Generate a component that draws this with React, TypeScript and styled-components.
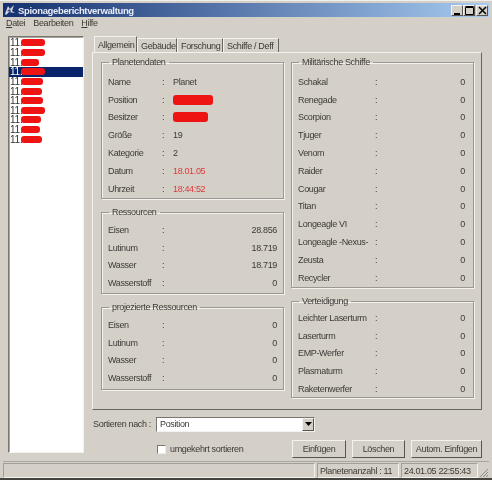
import styled, { createGlobalStyle } from 'styled-components';

const GlobalStyle = createGlobalStyle`
  html, body {
    margin: 0;
    padding: 0;
    background: #d4d0c8;
  }
  * {
    box-sizing: border-box;
  }
`;

const listWidths = [24, 24, 18, 24, 22, 21, 22, 24, 20, 19, 21];
const planetRows: [string, string, number?, boolean?][] = [
  ['Name', 'Planet'],
  ['Position', '', 40],
  ['Besitzer', '', 35],
  ['Größe', '19'],
  ['Kategorie', '2'],
  ['Datum', '18.01.05', undefined, true],
  ['Uhrzeit', '18:44:52', undefined, true],
];
const resources = [
  ['Eisen', '28.856'],
  ['Lutinum', '18.719'],
  ['Wasser', '18.719'],
  ['Wasserstoff', '0'],
];
const projected = ['Eisen', 'Lutinum', 'Wasser', 'Wasserstoff'];
const ships = [
  'Schakal', 'Renegade', 'Scorpion', 'Tjuger', 'Venom', 'Raider',
  'Cougar', 'Titan', 'Longeagle VI', 'Longeagle -Nexus-', 'Zeusta', 'Recycler',
];
const defence = ['Leichter Laserturm', 'Laserturm', 'EMP-Werfer', 'Plasmaturm', 'Raketenwerfer'];

const App = () => {
  return (
    <Page>
      <GlobalStyle />
      <TitleBar>
        <TitleIcon viewBox="0 0 12 12">
          <path d="M1 10 L4 2 L6 5 L10 1 L8 7 L11 9 L5 8 L2 11 Z" fill="#d8d8e8" />
          <path d="M3 7 L6 5 L7 8 Z" fill="#30406a" />
        </TitleIcon>
        <TitleText>Spionageberichtverwaltung</TitleText>
        <WinButtons>
          <WinButton>
            <svg width="9" height="9" viewBox="0 0 9 9"><rect x="1" y="7" width="6" height="2" fill="#000" /></svg>
          </WinButton>
          <WinButton>
            <svg width="9" height="9" viewBox="0 0 9 9"><path d="M0.5 1.5H8.5V8.5H0.5Z M0.5 0.5H8.5" fill="none" stroke="#000" /></svg>
          </WinButton>
          <CloseButton>
            <svg width="9" height="9" viewBox="0 0 9 9"><path d="M1 1L8 8M8 1L1 8" stroke="#000" strokeWidth="1.5" /></svg>
          </CloseButton>
        </WinButtons>
      </TitleBar>
      <MenuBar>
        <MenuItem><u>D</u>atei</MenuItem>
        <MenuItem>Bearbeiten</MenuItem>
        <MenuItem><u>H</u>ilfe</MenuItem>
      </MenuBar>
      <Body>
        <PlanetList>
          {listWidths.map((w, i) => (
            <ListRow key={i} $selected={i === 3}>
              11.<ListScribble $w={w} $h={7} />
            </ListRow>
          ))}
        </PlanetList>
        <MainColumn>
          <Tabs>
            <Tab $active $w={43}>Allgemein</Tab>
            <Tab $w={40}>Gebäude</Tab>
            <Tab $w={46}>Forschung</Tab>
            <Tab $w={56}>Schiffe / Deff</Tab>
          </Tabs>
          <TabPanel>
            <PanelColumn>
              <Group $h={142} $pad={5}>
                <Legend>Planetendaten</Legend>
                {planetRows.map(([label, value, blob, red]) => (
                  <Row key={label}>
                    <span>{label}</span>
                    <span>:</span>
                    {blob ? <Scribble $w={blob} $h={10} /> : <LeftValue $red={red}>{value}</LeftValue>}
                  </Row>
                ))}
              </Group>
              <Group $h={87} $pad={3}>
                <Legend>Ressourcen</Legend>
                {resources.map(([label, value]) => (
                  <Row key={label}>
                    <span>{label}</span>
                    <span>:</span>
                    <RightValue>{value}</RightValue>
                  </Row>
                ))}
              </Group>
              <Group $h={88} $pad={3}>
                <Legend>projezierte Ressourcen</Legend>
                {projected.map(label => (
                  <Row key={label}>
                    <span>{label}</span>
                    <span>:</span>
                    <RightValue>0</RightValue>
                  </Row>
                ))}
              </Group>
            </PanelColumn>
            <PanelColumn>
              <Group $h={231} $pad={5}>
                <Legend>Militärische Schiffe</Legend>
                {ships.map(label => (
                  <WideRow key={label}>
                    <span>{label}</span>
                    <span>:</span>
                    <RightValue>0</RightValue>
                  </WideRow>
                ))}
              </Group>
              <Group $h={102} $pad={2}>
                <Legend>Verteidigung</Legend>
                {defence.map(label => (
                  <WideRow key={label}>
                    <span>{label}</span>
                    <span>:</span>
                    <RightValue>0</RightValue>
                  </WideRow>
                ))}
              </Group>
            </PanelColumn>
          </TabPanel>
          <SortRow>
            <SortLabel>Sortieren nach :</SortLabel>
            <Combo>
              <ComboText>Position</ComboText>
              <ComboArrow>
                <svg width="7" height="4" viewBox="0 0 7 4"><path d="M0 0H7L3.5 4Z" fill="#000" /></svg>
              </ComboArrow>
            </Combo>
          </SortRow>
          <ActionRow>
            <CheckLabel>
              <CheckBox />
              umgekehrt sortieren
            </CheckLabel>
            <Buttons>
              <ActionButton $w={54}>Einfügen</ActionButton>
              <ActionButton $w={53}>Löschen</ActionButton>
              <ActionButton $w={71}>Autom. Einfügen</ActionButton>
            </Buttons>
          </ActionRow>
        </MainColumn>
      </Body>
      <StatusBar>
        <StatusCell $w={312} />
        <StatusCell $w={82}>Planetenanzahl : 11</StatusCell>
        <StatusCell $w={77}>24.01.05 22:55:43</StatusCell>
        <Grip width="12" height="12" viewBox="0 0 12 12">
          <path d="M11 3L3 11M11 6L6 11M11 9L9 11" stroke="#8c8a84" strokeWidth="1" />
        </Grip>
      </StatusBar>
    </Page>
  );
};

export default App;

const Page = styled.div`
  position: relative;
  width: 492px;
  height: 480px;
  padding: 2px 3px 2px 3px;
  background: #d4d0c8;
  border-top: 1px solid #f2f0ec;
  border-bottom: 2px solid #45443f;
  font-family: 'Liberation Sans', Arial, sans-serif;
  font-size: 9px;
  letter-spacing: -0.35px;
  white-space: nowrap;
  color: #3c3a36;
  overflow: hidden;
  filter: blur(0.3px);
`;

const TitleBar = styled.div`
  display: flex;
  align-items: center;
  height: 14px;
  padding: 0 1px;
  background: linear-gradient(to right, #14306f, #a6caf0);
`;

const TitleIcon = styled.svg`
  width: 12px;
  height: 12px;
  flex: none;
`;

const TitleText = styled.span`
  margin-left: 2px;
  font-size: 9.5px;
  font-weight: 700;
  letter-spacing: -0.35px;
  color: #e8ecf6;
`;

const WinButtons = styled.div`
  display: flex;
  margin-left: auto;
`;

const WinButton = styled.div`
  display: flex;
  align-items: center;
  justify-content: center;
  width: 12px;
  height: 11px;
  background: #d4d0c8;
  border: 1px solid;
  border-color: #f4f2ee #55544e #55544e #f4f2ee;
`;

const CloseButton = styled(WinButton)`
  margin-left: 1px;
`;

const MenuBar = styled.div`
  display: flex;
  gap: 8px;
  height: 16px;
  padding: 1px 3px 0;
`;

const MenuItem = styled.span`
  u {
    text-decoration: underline;
  }
`;

const Body = styled.div`
  display: flex;
  gap: 8px;
  padding-left: 5px;
  margin-top: 3px;
`;

const PlanetList = styled.div`
  flex: none;
  width: 76px;
  height: 417px;
  padding-top: 1px;
  background: #fff;
  border: 1px solid;
  border-color: #77756e #f4f2ee #f4f2ee #77756e;
  box-shadow: inset 1px 1px #a9a69e;
`;

const ListRow = styled.div<{ $selected?: boolean }>`
  display: flex;
  align-items: center;
  height: 9.65px;
  padding-left: 1px;
  font-size: 10px;
  letter-spacing: -0.2px;
  line-height: 9px;
  color: ${p => (p.$selected ? '#fff' : '#333')};
  background: ${p => (p.$selected ? '#0a246a' : 'transparent')};
`;

const Scribble = styled.span<{ $w: number; $h: number }>`
  display: block;
  width: ${p => p.$w}px;
  height: ${p => p.$h}px;
  background: #ee1414;
  border-radius: 3px;
`;

const ListScribble = styled(Scribble)`
  margin-left: -2px;
`;

const MainColumn = styled.div`
  flex: none;
  width: 390px;
`;

const Tabs = styled.div`
  display: flex;
  height: 16px;
  padding-left: 2px;
`;

const Tab = styled.div<{ $active?: boolean; $w: number }>`
  display: flex;
  align-items: center;
  width: ${p => p.$w}px;
  padding-left: 3px;
  height: ${p => (p.$active ? '16px' : '14px')};
  margin-top: ${p => (p.$active ? '0' : '2px')};
  background: #d4d0c8;
  border-top: 1px solid #f4f2ee;
  border-left: 1px solid #f4f2ee;
  border-right: 1px solid #66645e;
  position: relative;
  z-index: ${p => (p.$active ? 1 : 0)};
  margin-bottom: ${p => (p.$active ? '-1px' : '0')};
`;

const TabPanel = styled.div`
  display: grid;
  grid-template-columns: 183px 183px;
  column-gap: 7px;
  height: 358px;
  padding: 4px 0 0 8px;
  border: 1px solid;
  border-color: #f4f2ee #66645e #66645e #f4f2ee;
`;

const PanelColumn = styled.div`
  display: flex;
  flex-direction: column;
  gap: 8px;
`;

const Group = styled.fieldset<{ $h: number; $pad: number }>`
  height: ${p => p.$h}px;
  margin: 0;
  padding: ${p => p.$pad}px 6px 0 6px;
  min-width: 0;
  border: 1px solid #9a9890;
  box-shadow: 1px 1px #f4f2ee, inset 1px 1px #f4f2ee;
`;

const Legend = styled.legend`
  padding: 0 3px;
  margin-left: 1px;
  line-height: 11px;
`;

const Row = styled.div`
  display: grid;
  grid-template-columns: 54px 11px 1fr;
  align-items: center;
  height: 17.8px;
`;

const WideRow = styled(Row)`
  grid-template-columns: 77px 11px 1fr;
  padding-right: 2px;
`;

const LeftValue = styled.span<{ $red?: boolean }>`
  color: ${p => (p.$red ? '#e0393a' : 'inherit')};
`;

const RightValue = styled.span`
  text-align: right;
`;

const SortRow = styled.div`
  display: flex;
  align-items: center;
  height: 16px;
  margin-top: 6px;
  padding-left: 1px;
`;

const SortLabel = styled.span`
  width: 63px;
`;

const Combo = styled.div`
  display: flex;
  align-items: center;
  justify-content: space-between;
  width: 159px;
  height: 15px;
  background: #fff;
  border: 1px solid;
  border-color: #77756e #f4f2ee #f4f2ee #77756e;
`;

const ComboText = styled.span`
  padding-left: 3px;
`;

const ComboArrow = styled.div`
  display: flex;
  align-items: center;
  justify-content: center;
  width: 12px;
  height: 13px;
  background: #d4d0c8;
  border: 1px solid;
  border-color: #f4f2ee #55544e #55544e #f4f2ee;
`;

const ActionRow = styled.div`
  display: flex;
  align-items: center;
  justify-content: space-between;
  height: 20px;
  margin-top: 7px;
  padding-left: 65px;
`;

const CheckLabel = styled.label`
  display: flex;
  align-items: center;
  gap: 4px;
`;

const CheckBox = styled.span`
  display: block;
  width: 9px;
  height: 9px;
  background: #fff;
  border: 1px solid;
  border-color: #77756e #eeece8 #eeece8 #77756e;
`;

const Buttons = styled.div`
  display: flex;
  gap: 6px;
`;

const ActionButton = styled.div<{ $w: number }>`
  display: flex;
  align-items: center;
  justify-content: center;
  width: ${p => p.$w}px;
  height: 18px;
  background: #d4d0c8;
  border: 1px solid;
  border-color: #f4f2ee #55544e #55544e #f4f2ee;
`;

const StatusBar = styled.div`
  position: relative;
  display: flex;
  gap: 2px;
  height: 17px;
  margin-top: 2px;
  border-top: 1px solid #a9a69e;
  padding-top: 1px;
`;

const StatusCell = styled.div<{ $w: number }>`
  display: flex;
  align-items: center;
  width: ${p => p.$w}px;
  padding-left: 2px;
  border: 1px solid;
  border-color: #a09e96 #f4f2ee #f4f2ee #a09e96;
`;

const Grip = styled.svg`
  position: absolute;
  right: 0;
  bottom: 0;
`;
